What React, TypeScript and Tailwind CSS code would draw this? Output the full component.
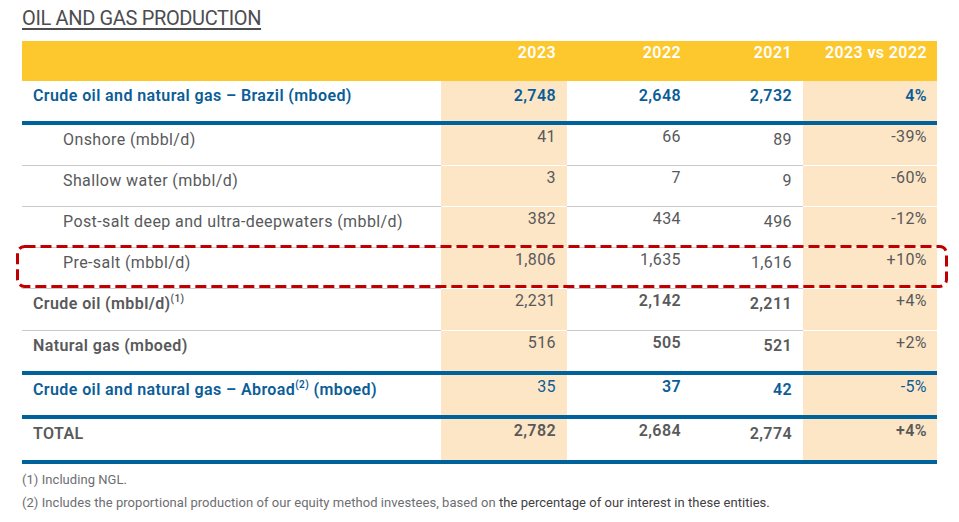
import React from 'react';

type Cell = { v: string; b?: boolean };
type Row = {
  label: React.ReactNode;
  indent?: boolean;
  bold?: boolean;
  blue?: boolean;
  top?: boolean;
  cells: Cell[];
  line: 'gray' | 'blue';
  h: string;
  highlight?: boolean;
};

const cols = 'grid grid-cols-[419px_126px_125px_111px_134px]';

const rows: Row[] = [
  {
    label: 'Crude oil and natural gas – Brazil (mboed)',
    bold: true,
    blue: true,
    top: true,
    cells: [{ v: '2,748', b: true }, { v: '2,648', b: true }, { v: '2,732', b: true }, { v: '4%', b: true }],
    line: 'blue',
    h: 'h-[44px]',
  },
  {
    label: 'Onshore (mbbl/d)',
    indent: true,
    cells: [{ v: '41' }, { v: '66' }, { v: '89' }, { v: '-39%' }],
    line: 'gray',
    h: 'h-[41px]',
  },
  {
    label: 'Shallow water (mbbl/d)',
    indent: true,
    cells: [{ v: '3' }, { v: '7' }, { v: '9' }, { v: '-60%' }],
    line: 'gray',
    h: 'h-[41px]',
  },
  {
    label: 'Post-salt deep and ultra-deepwaters (mbbl/d)',
    indent: true,
    cells: [{ v: '382' }, { v: '434' }, { v: '496' }, { v: '-12%' }],
    line: 'gray',
    h: 'h-[41px]',
  },
  {
    label: 'Pre-salt (mbbl/d)',
    indent: true,
    cells: [{ v: '1,806' }, { v: '1,635' }, { v: '1,616' }, { v: '+10%' }],
    line: 'gray',
    h: 'h-[41px]',
    highlight: true,
  },
  {
    label: (
      <>
        Crude oil (mbbl/d)
        <span className="text-[10px] leading-none font-semibold relative -top-[7px]">(1)</span>
      </>
    ),
    bold: true,
    cells: [{ v: '2,231' }, { v: '2,142', b: true }, { v: '2,211', b: true }, { v: '+4%' }],
    line: 'gray',
    h: 'h-[42px]',
  },
  {
    label: 'Natural gas (mboed)',
    bold: true,
    cells: [{ v: '516' }, { v: '505', b: true }, { v: '521', b: true }, { v: '+2%' }],
    line: 'blue',
    h: 'h-[44px]',
  },
  {
    label: (
      <>
        Crude oil and natural gas – Abroad
        <span className="text-[10px] leading-none font-semibold relative -top-[7px]">(2)</span> (mboed)
      </>
    ),
    bold: true,
    blue: true,
    cells: [{ v: '35' }, { v: '37', b: true }, { v: '42', b: true }, { v: '-5%' }],
    line: 'blue',
    h: 'h-[44px]',
  },
  {
    label: 'TOTAL',
    bold: true,
    cells: [{ v: '2,782', b: true }, { v: '2,684', b: true }, { v: '2,774', b: true }, { v: '+4%', b: true }],
    line: 'blue',
    h: 'h-[45px]',
  },
];

function DataRow({ row }: { row: Row }) {
  const text = row.blue ? 'text-[#0b5d97]' : 'text-[#58595b]';
  const blueLine = row.line === 'blue';
  const grayB = blueLine ? '' : 'border-b border-[#c9c9c9]';
  const whiteB = blueLine ? '' : 'border-b border-white';
  return (
    <div className={`relative ${cols} ${row.h} ${text} ${blueLine ? 'border-b-4 border-[#00629b]' : ''}`}>
      <div
        className={`${grayB} ${row.indent ? 'pl-[41px]' : 'pl-[11px]'} pt-[5px] ${row.bold ? 'font-semibold' : ''}`}
      >
        {row.label}
      </div>
      {row.cells.map((c, i) => {
        const beige = i === 0 || i === 3;
        const pt = row.top || i === 2 ? 'pt-[5px]' : 'pt-[2px]';
        return (
          <div
            key={i}
            className={`${beige ? `bg-[#fde6c6] ${whiteB}` : grayB} ${pt} text-right ${
              i === 3 ? 'pr-[10px]' : 'pr-[11px]'
            } ${c.b ? 'font-semibold' : ''}`}
          >
            {c.v}
          </div>
        );
      })}
      {row.highlight && (
        <svg
          className="absolute -left-[6px] -top-[3px] w-[932px] h-[44px] overflow-visible pointer-events-none"
          viewBox="0 0 932 44"
        >
          <rect
            x="1.5"
            y="1.5"
            width="929"
            height="40"
            rx="7"
            fill="none"
            stroke="#c00000"
            strokeWidth="3"
            strokeDasharray="11 5"
          />
        </svg>
      )}
    </div>
  );
}

export default function App() {
  return (
    <div className="w-[959px] h-[522px] bg-white overflow-hidden font-['Roboto',sans-serif] text-[16px] leading-[20px] tracking-[0.4px]">
      <div className="pl-[22px] pt-[6px]">
        <h1 className="text-[20px] leading-[24px] text-[#4d4d4f] underline decoration-[2px] underline-offset-[3px] tracking-[-0.35px]">
          OIL AND GAS PRODUCTION
        </h1>
        <div className="mt-[11px] w-[915px]">
          <div className={`${cols} h-[40px] bg-[#fdc72e] text-white font-semibold`}>
            <div />
            <div className="text-right pr-[11px] pt-[2px]">2023</div>
            <div className="text-right pr-[11px] pt-[2px]">2022</div>
            <div className="text-right pr-[11px] pt-[2px]">2021</div>
            <div className="text-right pr-[10px] pt-[2px]">2023 vs 2022</div>
          </div>
          {rows.map((r, i) => (
            <DataRow key={i} row={r} />
          ))}
        </div>
        <div className="mt-[8px] text-[13px] leading-[16px] text-[#6d6e71] tracking-[0.05px]">
          <p>(1) Including NGL.</p>
          <p className="mt-[7px]">
            (2) Includes the proportional production of our equity method investees, based on{' '}
            <span className="text-[#3f4042]">the percentage of our interest in these entities.</span>
          </p>
        </div>
      </div>
    </div>
  );
}
